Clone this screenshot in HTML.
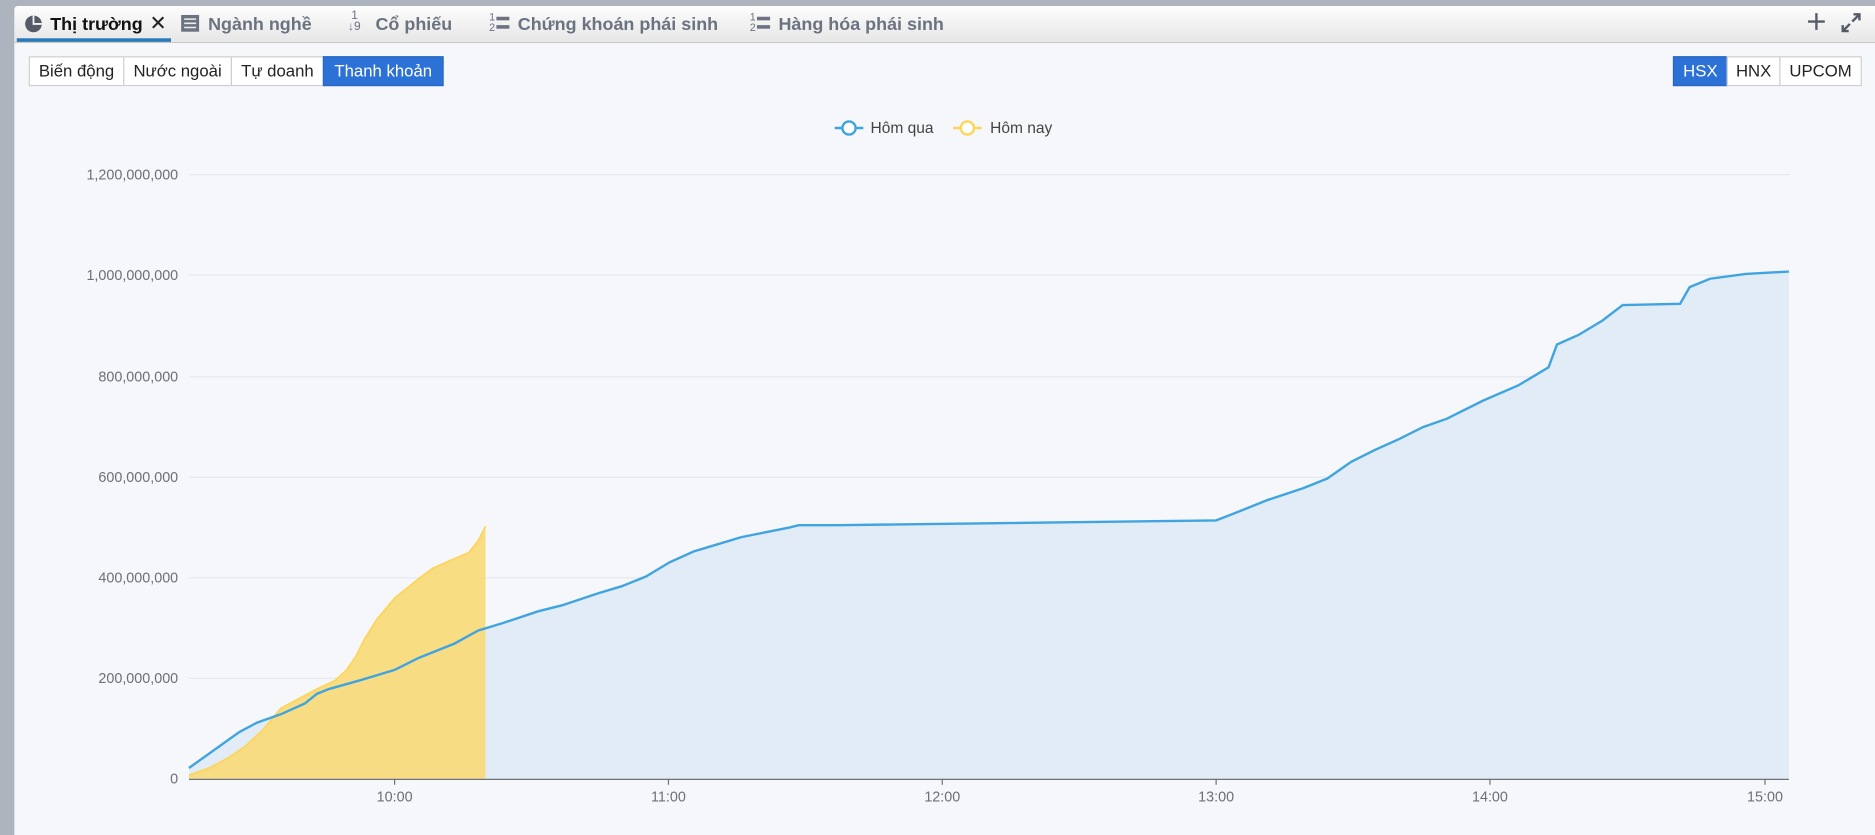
<!DOCTYPE html>
<html><head><meta charset="utf-8"><style>
*{box-sizing:border-box;margin:0;padding:0}
body{width:1875px;height:835px;overflow:hidden;background:#adb4bd;font-family:"Liberation Sans",Arial,sans-serif}
#w{position:absolute;left:0;top:0;width:1568px;height:698px;transform:scale(1.19579,1.1963);transform-origin:0 0}
#panel{position:absolute;left:12px;top:5px;width:1556px;height:693px;background:#f5f7fa;border-top-left-radius:3px}
#tabs{position:absolute;left:0;top:0;width:1556px;height:31px;background:linear-gradient(#fdfdfd,#e6e6e6);border-bottom:1px solid #c8c8c8;border-top-left-radius:3px}
.tab{position:absolute;top:7px;font-size:15px;color:#6b7280;font-weight:bold;white-space:nowrap}
.btn{position:absolute;top:42px;height:25px;border:1px solid #cfcfcf;background:#fff;font-size:14px;line-height:23px;text-align:center;color:#222}
.on{background:#2c71d6;color:#fff;border-color:#2a67c4}
.yl{position:absolute;right:1418px;font-size:12px;color:#6e7079;text-align:right}
.xl{position:absolute;top:658px;font-size:12px;color:#6e7079;width:60px;text-align:center}
</style></head><body><div id="w"><div id="panel">
<div id="tabs">
 <div style="position:absolute;left:2px;top:27px;width:129px;height:3px;background:#2a7ab8"></div>
 <svg style="position:absolute;left:8px;top:7px" width="16" height="16" viewBox="0 0 16 16"><circle cx="8" cy="8" r="7" fill="#555b66"/><path d="M8 1v7h7" fill="none" stroke="#f3f3f3" stroke-width="1.5"/></svg>
 <div class="tab" style="left:30px;color:#111">Thị trường</div>
 <div class="tab" style="left:113px;color:#222;font-weight:normal;font-size:17px;top:5px">✕</div>
 <svg style="position:absolute;left:139px;top:7px" width="16" height="15"><rect x="0.5" y="0.5" width="15" height="14" fill="#6b7280"/><path d="M3 4h10M3 7.5h10M3 11h10" stroke="#eee" stroke-width="1.3"/></svg>
 <div class="tab" style="left:162px">Ngành nghề</div>
 <div style="position:absolute;left:279px;top:4px;font-size:10px;color:#6b7280;line-height:9px">&nbsp;1<br>↓9</div>
 <div class="tab" style="left:302px">Cổ phiếu</div>
 <div style="position:absolute;left:397px;top:5px;font-size:9px;color:#6b7280;line-height:9px">1<br>2</div>
 <svg style="position:absolute;left:403px;top:7px" width="12" height="14"><rect x="0" y="2" width="11" height="3" fill="#6b7280"/><rect x="0" y="9" width="11" height="3" fill="#6b7280"/></svg>
 <div class="tab" style="left:421px">Chứng khoán phái sinh</div>
 <div style="position:absolute;left:615px;top:5px;font-size:9px;color:#6b7280;line-height:9px">1<br>2</div>
 <svg style="position:absolute;left:621px;top:7px" width="12" height="14"><rect x="0" y="2" width="11" height="3" fill="#6b7280"/><rect x="0" y="9" width="11" height="3" fill="#6b7280"/></svg>
 <div class="tab" style="left:639px">Hàng hóa phái sinh</div>
 <svg style="position:absolute;left:1499px;top:5px" width="16" height="16"><path d="M8 1v14M1 8h14" stroke="#555b66" stroke-width="2"/></svg>
 <svg style="position:absolute;left:1527px;top:5px" width="18" height="18"><path d="M10 8l6-6M11 2h5v5M8 10l-6 6M2 11v5h5" stroke="#555b66" stroke-width="2" fill="none"/></svg>
</div>
<div class="btn" style="left:12px;width:80px">Biến động</div>
<div class="btn" style="left:91px;width:91px">Nước ngoài</div>
<div class="btn" style="left:181px;width:78px">Tự doanh</div>
<div class="btn on" style="left:258px;width:101px">Thanh khoản</div>
<div class="btn on" style="left:1387px;width:46px">HSX</div>
<div class="btn" style="left:1432px;width:45px">HNX</div>
<div class="btn" style="left:1476px;width:69px">UPCOM</div>
</div>
<svg style="position:absolute;left:0;top:0" width="1568" height="698">
 <g font-family="Liberation Sans,sans-serif" font-size="13" fill="#444">
  <line x1="698" y1="107" x2="722" y2="107" stroke="#3fa4e0" stroke-width="2"/><circle cx="710" cy="107" r="5.5" fill="#fff" stroke="#3fa4e0" stroke-width="2"/>
  <text x="728" y="111">Hôm qua</text>
  <line x1="797" y1="107" x2="821" y2="107" stroke="#fcd55a" stroke-width="2"/><circle cx="809" cy="107" r="5.5" fill="#fff" stroke="#fcd55a" stroke-width="2"/>
  <text x="828" y="111">Hôm nay</text>
 </g>
 <g stroke="#e3e8ef" stroke-width="1">
  <line x1="158" y1="146" x2="1496" y2="146"/><line x1="158" y1="230" x2="1496" y2="230"/><line x1="158" y1="315" x2="1496" y2="315"/><line x1="158" y1="399" x2="1496" y2="399"/><line x1="158" y1="483" x2="1496" y2="483"/><line x1="158" y1="567" x2="1496" y2="567"/>
 </g>
 <path d="M158,642 L200,612 L215,604 L235,597 L255,588 L265,580 L275,576 L300,569 L330,560 L350,550 L380,538 L400,527 L420,521 L450,511 L470,506 L500,496 L520,490 L540,482 L560,470 L580,461 L600,455 L620,449 L640,445 L660,441 L668,439 L700,439 L1017,435 L1030,430 L1060,418 L1090,408 L1110,400 L1130,386 L1150,376 L1170,367 L1190,357 L1210,350 L1240,335 L1270,322 L1295,307 L1302,288 L1320,280 L1340,268 L1357,255 L1405,254 L1413,240 L1430,233 L1460,229 L1496,227 L1496,651 L158,651Z" fill="#e2ecf6"/>
 <path d="M158,648 L175,642 L190,634 L205,624 L220,610 L235,592 L250,584 L265,576 L280,569 L290,560 L298,548 L305,534 L315,518 L330,500 L340,492 L350,484 L362,475 L378,468 L392,462 L400,452 L406,440 L406,651 L158,651Z" fill="#f9db7c" opacity="0.95"/>
 <path d="M158,648 L175,642 L190,634 L205,624 L220,610 L235,592 L250,584 L265,576 L280,569 L290,560 L298,548 L305,534 L315,518 L330,500 L340,492 L350,484 L362,475 L378,468 L392,462 L400,452 L406,440" fill="none" stroke="#fcd55a" stroke-width="1.5"/>
 <path d="M158,642 L200,612 L215,604 L235,597 L255,588 L265,580 L275,576 L300,569 L330,560 L350,550 L380,538 L400,527 L420,521 L450,511 L470,506 L500,496 L520,490 L540,482 L560,470 L580,461 L600,455 L620,449 L640,445 L660,441 L668,439 L700,439 L1017,435 L1030,430 L1060,418 L1090,408 L1110,400 L1130,386 L1150,376 L1170,367 L1190,357 L1210,350 L1240,335 L1270,322 L1295,307 L1302,288 L1320,280 L1340,268 L1357,255 L1405,254 L1413,240 L1430,233 L1460,229 L1496,227" fill="none" stroke="#3fa4e0" stroke-width="2"/>
 <line x1="158" y1="651.5" x2="1496" y2="651.5" stroke="#6e7079"/>
 <g stroke="#6e7079"><line x1="330" y1="651" x2="330" y2="656"/><line x1="559" y1="651" x2="559" y2="656"/><line x1="788" y1="651" x2="788" y2="656"/><line x1="1017" y1="651" x2="1017" y2="656"/><line x1="1246" y1="651" x2="1246" y2="656"/><line x1="1476" y1="651" x2="1476" y2="656"/></g>
 <g font-family="Liberation Sans,sans-serif" font-size="12" fill="#6e7079" text-anchor="end">
  <text x="149" y="150">1,200,000,000</text><text x="149" y="234">1,000,000,000</text><text x="149" y="319">800,000,000</text><text x="149" y="403">600,000,000</text><text x="149" y="487">400,000,000</text><text x="149" y="571">200,000,000</text><text x="149" y="655">0</text>
 </g>
 <g font-family="Liberation Sans,sans-serif" font-size="12" fill="#6e7079" text-anchor="middle">
  <text x="330" y="670">10:00</text><text x="559" y="670">11:00</text><text x="788" y="670">12:00</text><text x="1017" y="670">13:00</text><text x="1246" y="670">14:00</text><text x="1476" y="670">15:00</text>
 </g>
</svg>
</div></body></html>
